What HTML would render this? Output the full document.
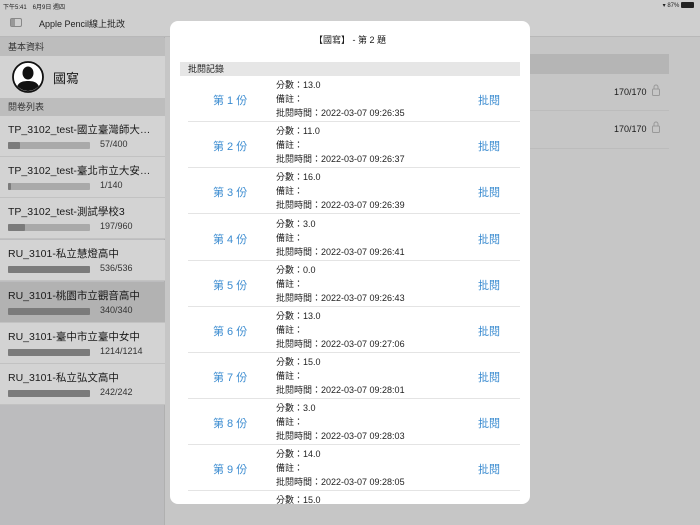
<!DOCTYPE html>
<html><head><meta charset="utf-8"><style>
*{margin:0;padding:0;box-sizing:border-box}
body{width:700px;height:525px;overflow:hidden;background:#c6c6c6;font-family:"Liberation Sans","Noto Sans CJK TC",sans-serif;position:relative;color:#1a1a1a}
.abs{position:absolute}
.sb{left:0;top:0;width:165px;height:525px;background:#bcbcbe;border-right:1px solid #b0b0b0}
.nav{left:0;top:0;width:700px;height:37px;background:#cfcfcf;border-bottom:1px solid #b8b8b8}
.hdr{left:0;width:165px;height:18px;background:#bdbdbd;font-size:9px;line-height:18px;padding-left:8px;color:#333}
.item{left:0;width:165px;height:41px;background:#d3d3d3;border-bottom:1px solid #c2c2c2}
.item .t{position:absolute;left:8px;top:6px;font-size:10.5px;white-space:nowrap}
.item .bar{position:absolute;left:8px;top:26px;width:82px;height:7px;background:#a9a9a9;border-radius:1px}
.item .fill{height:7px;background:#7b7b7b;border-radius:1px}
.item .n{position:absolute;left:100px;top:23px;font-size:9px;color:#333}
.modal{left:170px;top:21px;width:360px;height:483px;background:#fff;border-radius:8px;overflow:hidden}
.row{position:absolute;left:18px;width:332px;height:46px;border-bottom:1px solid #e4e4e4}
.row .k{position:absolute;left:25px;top:16px;font-size:11px;color:#3a8bd0}
.row .d{position:absolute;left:88px;top:2px;font-size:9px;line-height:14px;color:#222}
.row .p{position:absolute;left:290px;top:16px;font-size:11px;color:#3a8bd0}
.lock{position:absolute;left:122px;top:10px;width:8px;height:12px}
</style></head><body>
<div class="abs nav"></div>
<div class="abs" style="left:3px;top:2px;font-size:6px;color:#222">下午5:41　6月9日 週四</div>
<div class="abs" style="right:6px;top:2px;font-size:6px;color:#222">▾ 87% <span style="display:inline-block;width:13px;height:6px;background:#222;border-radius:1px;vertical-align:middle"></span></div>
<div class="abs" style="left:10px;top:18px;width:12px;height:9px;border:1px solid #888;border-radius:2px"><div style="width:4px;height:7px;background:#999"></div></div>
<div class="abs" style="left:39px;top:17px;font-size:9px;color:#222">Apple Pencil線上批改</div>
<div class="abs sb" style="top:37px;height:488px"></div>
<div class="abs hdr" style="top:38px">基本資料</div>
<div class="abs" style="left:0;top:56px;width:165px;height:42px;background:#d3d3d3"></div>
<svg class="abs" style="left:12px;top:61px" width="32" height="32" viewBox="0 0 32 32"><circle cx="16" cy="16" r="15" fill="#fff" stroke="#111" stroke-width="1.8"/><clipPath id="c"><circle cx="16" cy="16" r="14"/></clipPath><g clip-path="url(#c)" fill="#111"><ellipse cx="16" cy="12" rx="5.5" ry="6.5"/><path d="M4 32 C4 22 9 20 16 20 C23 20 28 22 28 32Z"/></g></svg>
<div class="abs" style="left:53px;top:68px;font-size:13px">國寫</div>
<div class="abs hdr" style="top:98px">閱卷列表</div>
<div class="abs item" style="top:116px"><div class="t">TP_3102_test-國立臺灣師大…</div><div class="bar"><div class="fill" style="width:12px"></div></div><div class="n">57/400</div></div>
<div class="abs item" style="top:157px"><div class="t">TP_3102_test-臺北市立大安…</div><div class="bar"><div class="fill" style="width:3px"></div></div><div class="n">1/140</div></div>
<div class="abs item" style="top:198px"><div class="t">TP_3102_test-測試學校3</div><div class="bar"><div class="fill" style="width:17px"></div></div><div class="n">197/960</div></div>
<div class="abs item" style="top:240px"><div class="t">RU_3101-私立慧燈高中</div><div class="bar"><div class="fill" style="width:82px"></div></div><div class="n">536/536</div></div>
<div class="abs item" style="top:282px;background:#b2b2b2"><div class="t">RU_3101-桃園市立觀音高中</div><div class="bar"><div class="fill" style="width:82px"></div></div><div class="n">340/340</div></div>
<div class="abs item" style="top:323px"><div class="t">RU_3101-臺中市立臺中女中</div><div class="bar"><div class="fill" style="width:82px"></div></div><div class="n">1214/1214</div></div>
<div class="abs item" style="top:364px"><div class="t">RU_3101-私立弘文高中</div><div class="bar"><div class="fill" style="width:82px"></div></div><div class="n">242/242</div></div>
<div class="abs" style="left:530px;top:54px;width:139px;height:20px;background:#b5b5b5"></div>
<div class="abs" style="left:530px;top:74px;width:139px;height:37px;border-bottom:1px solid #bcbcbc"><span style="position:absolute;left:84px;top:13px;font-size:9px">170/170</span><svg class="lock" viewBox="0 0 8 12"><path d="M2 5V3a2 2 0 0 1 4 0v2" fill="none" stroke="#999" stroke-width="1"/><rect x="0.5" y="5" width="7" height="6.5" rx="1" fill="none" stroke="#999" stroke-width="1"/></svg></div>
<div class="abs" style="left:530px;top:111px;width:139px;height:38px;border-bottom:1px solid #bcbcbc"><span style="position:absolute;left:84px;top:13px;font-size:9px">170/170</span><svg class="lock" viewBox="0 0 8 12"><path d="M2 5V3a2 2 0 0 1 4 0v2" fill="none" stroke="#999" stroke-width="1"/><rect x="0.5" y="5" width="7" height="6.5" rx="1" fill="none" stroke="#999" stroke-width="1"/></svg></div>
<div class="abs modal">
<div class="abs" style="left:0;top:12px;width:360px;text-align:center;font-size:9px">【國寫】 - 第 2 題</div>
<div class="abs" style="left:10px;top:41px;width:340px;height:14px;background:#e6e6e6;font-size:9px;line-height:14px;padding-left:8px">批閱記錄</div>
<div class="row" style="top:55px"><div class="k">第 1 份</div><div class="d">分數：13.0<br>備註：<br>批閱時間：2022-03-07 09:26:35</div><div class="p">批閱</div></div>
<div class="row" style="top:101px"><div class="k">第 2 份</div><div class="d">分數：11.0<br>備註：<br>批閱時間：2022-03-07 09:26:37</div><div class="p">批閱</div></div>
<div class="row" style="top:147px"><div class="k">第 3 份</div><div class="d">分數：16.0<br>備註：<br>批閱時間：2022-03-07 09:26:39</div><div class="p">批閱</div></div>
<div class="row" style="top:194px"><div class="k">第 4 份</div><div class="d">分數：3.0<br>備註：<br>批閱時間：2022-03-07 09:26:41</div><div class="p">批閱</div></div>
<div class="row" style="top:240px"><div class="k">第 5 份</div><div class="d">分數：0.0<br>備註：<br>批閱時間：2022-03-07 09:26:43</div><div class="p">批閱</div></div>
<div class="row" style="top:286px"><div class="k">第 6 份</div><div class="d">分數：13.0<br>備註：<br>批閱時間：2022-03-07 09:27:06</div><div class="p">批閱</div></div>
<div class="row" style="top:332px"><div class="k">第 7 份</div><div class="d">分數：15.0<br>備註：<br>批閱時間：2022-03-07 09:28:01</div><div class="p">批閱</div></div>
<div class="row" style="top:378px"><div class="k">第 8 份</div><div class="d">分數：3.0<br>備註：<br>批閱時間：2022-03-07 09:28:03</div><div class="p">批閱</div></div>
<div class="row" style="top:424px"><div class="k">第 9 份</div><div class="d">分數：14.0<br>備註：<br>批閱時間：2022-03-07 09:28:05</div><div class="p">批閱</div></div>
<div class="row" style="top:470px;border:none"><div class="d">分數：15.0</div></div>
</div>
</body></html>
